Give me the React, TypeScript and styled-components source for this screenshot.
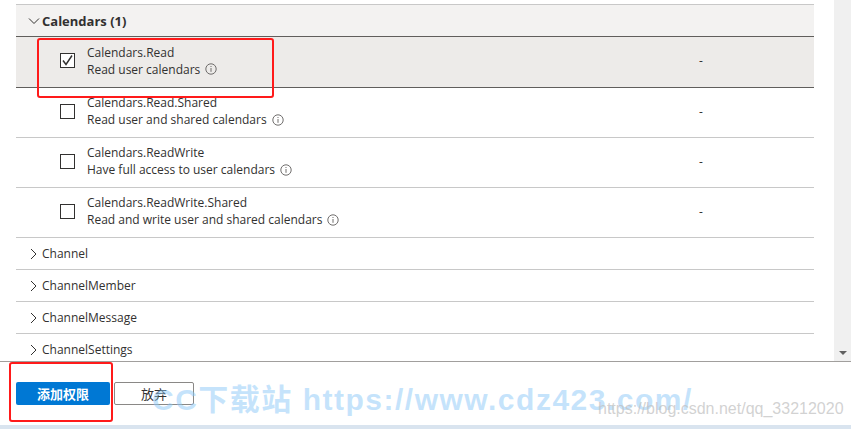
import React from 'react';
import styled, { createGlobalStyle } from 'styled-components';

const GlobalStyle = createGlobalStyle`
  body {
    margin: 0;
    font-family: 'Open Sans', 'Noto Sans', sans-serif;
    color: #323130;
    background: #ffffff;
  }
`;

const Page = styled.div`
  position: relative;
  width: 851px;
  height: 429px;
  display: flex;
  flex-direction: column;
  overflow: hidden;
  background: #ffffff;
`;

const ScrollArea = styled.div`
  height: 361px;
  display: flex;
  flex-shrink: 0;
`;

const ListPane = styled.div`
  flex: 1;
  padding: 4px 20px 0 16px;
  overflow: hidden;
`;

const Scrollbar = styled.div`
  width: 17px;
  background: #f0f0f0;
  display: flex;
  flex-direction: column;
  justify-content: flex-end;
  align-items: center;
  padding-bottom: 6px;
  box-sizing: border-box;
`;

const ScrollArrow = styled.div`
  width: 0;
  height: 0;
  border-left: 4px solid transparent;
  border-right: 4px solid transparent;
  border-top: 4px solid #606060;
`;

const GroupHeader = styled.div`
  height: 31px;
  border-top: 1px solid #c8c8c8;
  background: #f3f2f1;
  display: flex;
  align-items: center;
  padding-left: 12px;
  gap: 2px;
  font-size: 13px;
  font-weight: 700;
`;

const PermissionRow = styled.div<{ selected?: boolean }>`
  height: ${({ selected }) => (selected ? 52 : 50)}px;
  box-sizing: border-box;
  padding-bottom: 3px;
  display: grid;
  grid-template-columns: 683px 1fr;
  align-items: center;
  background: ${({ selected }) => (selected ? '#edebe9' : '#ffffff')};
  border-top: ${({ selected }) => (selected ? '1px solid #605e5c' : 'none')};
  border-bottom: 1px solid ${({ selected }) => (selected ? '#605e5c' : '#c8c8c8')};
`;

const NameCell = styled.div`
  display: flex;
  align-items: center;
  padding-left: 44px;
  gap: 12px;
`;

const Checkbox = styled.div<{ checked?: boolean }>`
  width: 15px;
  height: 15px;
  box-sizing: border-box;
  border: 1px solid #323130;
  background: #ffffff;
  display: flex;
  align-items: center;
  justify-content: center;
`;

const NameText = styled.div`
  display: flex;
  flex-direction: column;
  font-size: 12px;
  line-height: 17px;
`;

const Description = styled.span`
  display: flex;
  align-items: center;
  gap: 5px;
`;

const DashCell = styled.div`
  font-size: 12px;
`;

const CollapsedRow = styled.div`
  height: 31px;
  border-bottom: 1px solid #c8c8c8;
  display: flex;
  align-items: center;
  padding-left: 12px;
  gap: 4px;
  font-size: 12px;
`;

const Footer = styled.div`
  flex: 1;
  border-top: 1px solid #a19f9d;
  display: flex;
  align-items: flex-start;
  padding: 20px 16px 0;
  gap: 4px;
`;

const PrimaryButton = styled.button`
  width: 94px;
  height: 23px;
  border: none;
  border-radius: 2px;
  background: #0078d4;
  color: #ffffff;
  font-family: 'Noto Sans CJK SC', sans-serif;
  font-weight: 700;
  font-size: 13px;
  padding: 0;
`;

const SecondaryButton = styled.button`
  width: 80px;
  height: 23px;
  border: 1px solid #8a8886;
  border-radius: 2px;
  background: #ffffff;
  color: #323130;
  font-family: 'Noto Sans CJK SC', sans-serif;
  font-size: 13px;
  padding: 0;
`;

const BottomStrip = styled.div`
  height: 4px;
  background: #d9e4ef;
`;

const Highlight = styled.div<{ x: number; y: number; w: number; h: number }>`
  position: absolute;
  left: ${({ x }) => x}px;
  top: ${({ y }) => y}px;
  width: ${({ w }) => w}px;
  height: ${({ h }) => h}px;
  box-sizing: border-box;
  border: 2px solid #ff1a1a;
  border-radius: 3px;
  pointer-events: none;
`;

const SiteMark = styled.div`
  position: absolute;
  left: 152px;
  top: 375px;
  font-family: 'Liberation Sans', 'Noto Sans CJK SC', sans-serif;
  font-weight: 700;
  font-size: 30px;
  letter-spacing: 1.5px;
  color: rgba(140, 200, 248, 0.5);
  white-space: nowrap;
  pointer-events: none;
`;

const BlogMark = styled.div`
  position: absolute;
  left: 598px;
  top: 400px;
  font-family: 'Liberation Sans', sans-serif;
  font-size: 16px;
  color: rgba(190, 190, 190, 0.7);
  white-space: nowrap;
  pointer-events: none;
`;

const ChevronDown = () => (
  <svg width="12" height="12" viewBox="0 0 12 12">
    <path d="M1 3.5 L6 8.5 L11 3.5" fill="none" stroke="#323130" strokeWidth="1" />
  </svg>
);

const ChevronRight = () => (
  <svg width="10" height="12" viewBox="0 0 10 12">
    <path d="M3 1 L8 6 L3 11" fill="none" stroke="#323130" strokeWidth="1" />
  </svg>
);

const CheckMark = () => (
  <svg width="13" height="13" viewBox="0 0 13 13">
    <path d="M2 6.5 L5 10.5 L11 1.5" fill="none" stroke="#323130" strokeWidth="1.5" />
  </svg>
);

const InfoIcon = () => (
  <svg width="12" height="12" viewBox="0 0 12 12">
    <circle cx="6" cy="6" r="5.2" fill="none" stroke="#605e5c" strokeWidth="0.9" />
    <line x1="6" y1="5" x2="6" y2="8.8" stroke="#605e5c" strokeWidth="0.9" />
    <circle cx="6" cy="3.5" r="0.6" fill="#605e5c" />
  </svg>
);

const permissions = [
  { name: 'Calendars.Read', description: 'Read user calendars', checked: true },
  { name: 'Calendars.Read.Shared', description: 'Read user and shared calendars', checked: false },
  { name: 'Calendars.ReadWrite', description: 'Have full access to user calendars', checked: false },
  { name: 'Calendars.ReadWrite.Shared', description: 'Read and write user and shared calendars', checked: false },
];

const otherGroups = ['Channel', 'ChannelMember', 'ChannelMessage', 'ChannelSettings'];

export default function App() {
  return (
    <Page>
      <GlobalStyle />
      <ScrollArea>
        <ListPane>
          <GroupHeader>
            <ChevronDown />
            Calendars (1)
          </GroupHeader>
          {permissions.map((item) => (
            <PermissionRow key={item.name} selected={item.checked}>
              <NameCell>
                <Checkbox checked={item.checked}>{item.checked && <CheckMark />}</Checkbox>
                <NameText>
                  <span>{item.name}</span>
                  <Description>
                    {item.description}
                    <InfoIcon />
                  </Description>
                </NameText>
              </NameCell>
              <DashCell>-</DashCell>
            </PermissionRow>
          ))}
          {otherGroups.map((group) => (
            <CollapsedRow key={group}>
              <ChevronRight />
              {group}
            </CollapsedRow>
          ))}
        </ListPane>
        <Scrollbar>
          <ScrollArrow />
        </Scrollbar>
      </ScrollArea>
      <Footer>
        <PrimaryButton>添加权限</PrimaryButton>
        <SecondaryButton>放弃</SecondaryButton>
      </Footer>
      <BottomStrip />
      <Highlight x={37} y={38} w={237} h={60} />
      <Highlight x={9} y={362} w={104} h={60} />
      <SiteMark>CC下载站 https://www.cdz423.com/</SiteMark>
      <BlogMark>https://blog.csdn.net/qq_33212020</BlogMark>
    </Page>
  );
}
